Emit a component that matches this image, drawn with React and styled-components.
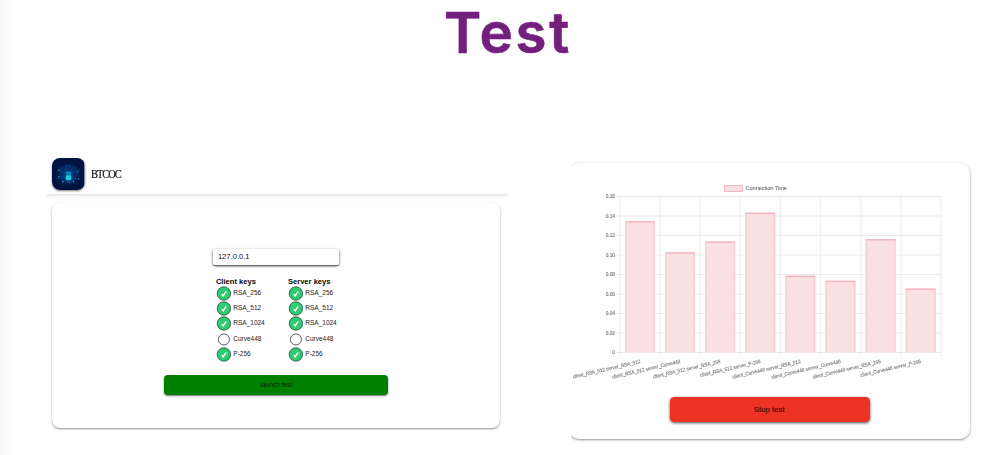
import React from 'react';
import styled, { createGlobalStyle } from 'styled-components';

const GlobalStyle = createGlobalStyle`
  * { box-sizing: border-box; }
  body { margin: 0; background: #fefefe; font-family: "Liberation Sans", Arial, sans-serif; }
`;

const Page = styled.main`
  width: 996px;
  height: 455px;
  background: linear-gradient(90deg, #f7f9f9 0, #fbfcfc 7px, #fefefe 16px);
`;

const Title = styled.h1`
  margin: 0;
  height: 157px;
  padding: 0 0 0 444px;
  font: 600 56.5px/66px Inter, sans-serif;
  letter-spacing: 2.6px;
  color: #731f7d;
  -webkit-text-stroke: 0.7px #731f7d;
`;

const Columns = styled.div`
  display: flex;
  align-items: flex-start;
  padding-left: 46px;
`;

const Launcher = styled.section`
  width: 462px;
  height: 298px;
  margin-right: 63px;
`;

const Header = styled.header`
  display: flex;
  align-items: center;
  gap: 6px;
  height: 37px;
  padding: 0 0 3px 6.4px;
  box-shadow: 0 2px 3px rgba(0, 0, 0, 0.1);
  clip-path: inset(0 0 -8px 0);
`;

const Logo = styled.svg`
  width: 32.5px;
  height: 32.5px;
  border-radius: 8px;
  box-shadow: 0 1px 2px rgba(0, 0, 0, 0.5);
`;

const Brand = styled.span`
  font: 13.5px/16px "Liberation Serif", serif;
  letter-spacing: -1.3px;
  color: #111;
  transform: scaleX(0.77);
  transform-origin: left center;
  -webkit-text-stroke: 0.2px #111;
`;

const FormCard = styled.div`
  display: flex;
  flex-direction: column;
  align-items: center;
  width: 448px;
  height: 225px;
  margin: 9px 0 0 6.4px;
  padding-top: 46px;
  border-radius: 8px;
  background: #fff;
  box-shadow: 0 1px 2px rgba(0, 0, 0, 0.42);
`;

const HostInput = styled.input`
  width: 126px;
  height: 16px;
  padding: 0 4.5px;
  border: 0;
  border-radius: 2px;
  outline: 0;
  background: #fff;
  box-shadow: 0 1px 2.5px rgba(0, 0, 0, 0.85);
  font: 7.6px/16px "Liberation Sans", sans-serif;
  color: #111;
`;

const KeyGroups = styled.div`
  display: flex;
  width: 121px;
  margin-top: 12px;
`;

const KeyGroup = styled.div`
  flex: 0 0 72px;
`;

const GroupTitle = styled.h2`
  margin: 0;
  font: 700 7.6px/9px "Liberation Sans", sans-serif;
  color: #080808;
  white-space: nowrap;
`;

const KeyRow = styled.label`
  display: flex;
  align-items: center;
  gap: 2.4px;
  height: 15.2px;
  font-size: 6.5px;
  line-height: 12px;
  color: #222;

  span { margin-top: -1px; }
`;

const Check = styled.svg`
  flex: none;
  width: 15px;
  height: 15px;
`;

const LaunchButton = styled.button`
  width: 224px;
  height: 20px;
  margin-top: 13px;
  padding: 0;
  border: 0;
  border-radius: 4px;
  background: #008000;
  box-shadow: 0 1px 2px rgba(0, 0, 0, 0.55);
  font: 6.6px/20px "Liberation Sans", sans-serif;
  color: #062306;
`;

const ResultFrame = styled.section`
  width: 403px;
  height: 290px;
  padding-top: 6px;
  overflow: hidden;
`;

const ResultCard = styled.div`
  display: flex;
  flex-direction: column;
  align-items: center;
  width: 401px;
  height: 276px;
  margin-left: -2px;
  border-radius: 10px;
  background: #fefefe;
  box-shadow: 0 1px 2.5px rgba(0, 0, 0, 0.42);
`;

const Chart = styled.svg`
  display: block;
  flex: none;
  width: 401px;
  height: 233.5px;
  font-family: "Liberation Sans", Arial, sans-serif;
`;

const ChartText = styled.g`
  fill: #777;
  stroke: #777;
  stroke-width: 0.12px;
  filter: blur(0.4px);
`;

const StopButton = styled.button`
  flex: none;
  width: 200px;
  height: 25px;
  padding: 0;
  border: 0;
  border-radius: 4.5px;
  background: #eb3223;
  box-shadow: 0 1px 3px rgba(0, 0, 0, 0.7);
  font: 7.8px/25px "Liberation Sans", sans-serif;
  color: #4a100b;
  -webkit-text-stroke: 0.2px #4a100b;

  span { display: inline-block; filter: blur(0.35px); }
`;

const KEYS = [
  ['RSA_256', true],
  ['RSA_512', true],
  ['RSA_1024', true],
  ['Curve448', false],
  ['P-256', true],
];

const BARS = [
  ['client_RSA_512 server_RSA_512', 0.1345, 69],
  ['client_RSA_512 server_Curve448', 0.1027, 70],
  ['client_RSA_512 server_RSA_256', 0.1137, 69],
  ['client_RSA_512 server_P-256', 0.1433, 62],
  ['client_Curve448 server_RSA_512', 0.0787, 70],
  ['client_Curve448 server_Curve448', 0.0735, 71],
  ['client_Curve448 server_RSA_256', 0.1162, 70],
  ['client_Curve448 server_P-256', 0.0655, 62],
];

const TICKS = ['0.16', '0.14', '0.12', '0.10', '0.08', '0.06', '0.04', '0.02', '0'];
const LEFT = 51;
const TOP = 33.5;
const BOTTOM = 189.5;
const STEP = 40.1;

function CheckMark({ checked }) {
  return (
    <Check viewBox="0 0 15 15">
      <circle
        cx="7.9"
        cy="7.5"
        r={checked ? 6.7 : 5.5}
        fill={checked ? '#2ecc71' : '#fff'}
        stroke={checked ? '#28483a' : '#333'}
        strokeWidth="0.8"
      />
      {checked && <path d="M5.7 8.2 7.2 9.8 10.2 5.4" fill="none" stroke="#fff" strokeWidth="1.5" />}
    </Check>
  );
}

function Keys({ title }) {
  return (
    <KeyGroup>
      <GroupTitle>{title}</GroupTitle>
      {KEYS.map(([name, checked]) => (
        <KeyRow key={name}>
          <CheckMark checked={checked} />
          <span>{name}</span>
        </KeyRow>
      ))}
    </KeyGroup>
  );
}

function BrandLogo() {
  return (
    <Logo viewBox="0 0 33 33">
      <defs>
        <radialGradient id="glow">
          <stop offset="0" stopColor="#087bb5" stopOpacity="0.75" />
          <stop offset="0.5" stopColor="#05418d" stopOpacity="0.45" />
          <stop offset="1" stopColor="#021342" stopOpacity="0" />
        </radialGradient>
      </defs>
      <rect width="33" height="33" fill="#021342" />
      <circle cx="16.5" cy="17" r="14" fill="url(#glow)" />
      <g fill="none" stroke="#0871bd" strokeWidth="0.6" opacity="0.65">
        <circle cx="16.5" cy="15.5" r="8.5" strokeDasharray="3 1" />
        <path d="M13.5 14v-3a3 3 0 0 1 6 0v3M5 12h4l2 3M28 12h-4l-2 3M4 21h5l2-3M28 22h-4l-2-3M10 26l3-3M23 26l-3-3M8 9l3 2M25 9l-3 2" />
      </g>
      <g fill="#119bd3">
        <circle cx="7" cy="12.5" r="0.8" />
        <circle cx="26" cy="14" r="0.8" />
        <circle cx="7" cy="19" r="0.8" />
        <circle cx="27" cy="21" r="0.8" />
        <circle cx="11" cy="24" r="0.8" />
        <circle cx="22" cy="24" r="0.8" />
      </g>
      <rect x="14" y="14" width="5.5" height="3" rx="1" fill="#0788bd" />
      <rect x="14" y="17.5" width="5.5" height="5" rx="1" fill="#19cad6" />
      <path d="M15 25h4" stroke="#09609e" />
    </Logo>
  );
}

function ConnectionChart() {
  return (
    <Chart viewBox="0 0 401 233.5">
      <g stroke="#000" strokeOpacity="0.075" strokeWidth="1">
        {TICKS.map((tick, i) => (
          <line key={tick} x1="47" x2="372" y1={TOP + i * 19.5} y2={TOP + i * 19.5} />
        ))}
      </g>
      <g stroke="#000" strokeOpacity="0.04" strokeWidth="1.8">
        {Array.from({ length: 9 }, (_, i) => (
          <line key={i} x1={LEFT + i * STEP} x2={LEFT + i * STEP} y1={TOP} y2="193" />
        ))}
      </g>
      {BARS.map(([label, value], i) => {
        const x = LEFT + 5 + i * STEP;
        const y = BOTTOM - value * 975;
        return (
          <g key={label}>
            <rect x={x} y={y} width="30" height={BOTTOM - y} fill="#fae0e4" />
            <path d={`M${x + 0.8} ${BOTTOM}V${y + 0.7}H${x + 29.2}V${BOTTOM}`} fill="none" stroke="#f7cdd4" strokeWidth="1.5" />
            <path d={`M${x} ${y + 0.5}h30`} stroke="#f3afbb" />
          </g>
        );
      })}
      <rect x="155.5" y="22.5" width="18" height="6" fill="#fae0e4" stroke="#f3b8c3" />
      <ChartText>
        <text x="176.5" y="27.3" fontSize="5.7" textLength="41.5">Connection Time</text>
        {TICKS.map((tick, i) => (
          <text key={tick} x="46" y={TOP + 1.6 + i * 19.5} fontSize="4.8" textAnchor="end">{tick}</text>
        ))}
        {BARS.map(([label, , width], i) => {
          const x = LEFT + 20.5 + i * STEP;
          return (
            <text
              key={label}
              x={x - width}
              y="200"
              fontSize="5.2"
              textLength={width}
              lengthAdjust="spacingAndGlyphs"
              transform={`rotate(-13 ${x} 200)`}
            >
              {label}
            </text>
          );
        })}
      </ChartText>
    </Chart>
  );
}

export default function App() {
  return (
    <>
      <GlobalStyle />
      <Page>
        <Title>Test</Title>
        <Columns>
          <Launcher>
            <Header>
              <BrandLogo />
              <Brand>BTCOC</Brand>
            </Header>
            <FormCard>
              <HostInput defaultValue="127.0.0.1" aria-label="Server address" />
              <KeyGroups>
                <Keys title="Client keys" />
                <Keys title="Server keys" />
              </KeyGroups>
              <LaunchButton>launch test</LaunchButton>
            </FormCard>
          </Launcher>
          <ResultFrame>
            <ResultCard>
              <ConnectionChart />
              <StopButton><span>Stop test</span></StopButton>
            </ResultCard>
          </ResultFrame>
        </Columns>
      </Page>
    </>
  );
}
